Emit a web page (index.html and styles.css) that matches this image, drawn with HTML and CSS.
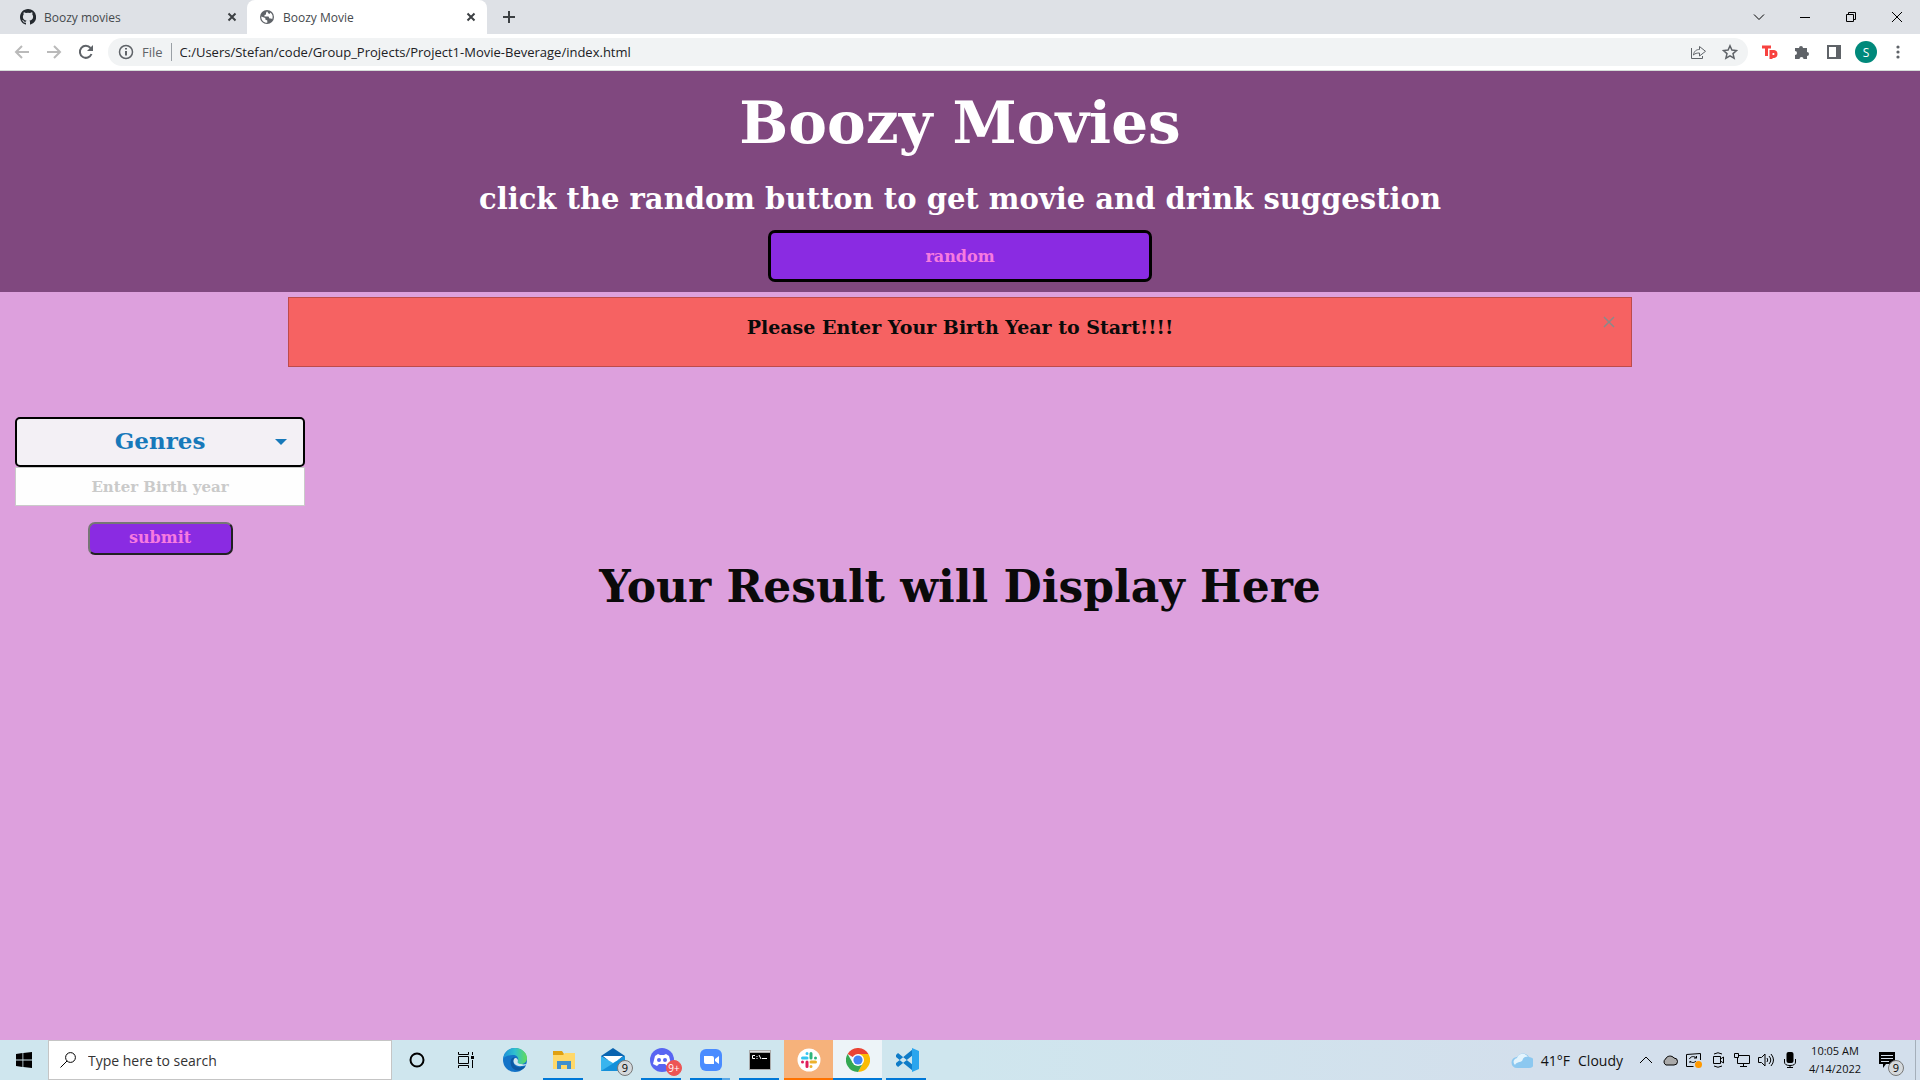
FILE: index.html
```html
<!DOCTYPE html>
<html lang="en">
<head>
<meta charset="utf-8">
<title>Boozy Movie</title>
<link rel="stylesheet" href="styles.css">
</head>
<body>
<div class="tabs">
  <div class="tab">
    <svg class="i16" viewBox="0 0 16 16"><path fill="#24292f" d="M8 0C3.6 0 0 3.6 0 8c0 3.500 2.300 6.500 5.500 7.600.4.1.5-.2.5-.4v-1.500c-2.200.5-2.700-.9-2.700-.9-.4-.9-.9-1.200-.9-1.200-.7-.5.1-.5.1-.5.800.1 1.200.8 1.200.8.7 1.200 1.900.9 2.300.7.1-.5.3-.9.5-1.100-1.800-.2-3.600-.9-3.600-4 0-.9.3-1.600.8-2.100-.1-.2-.4-1 .1-2.100 0 0 .7-.2 2.200.8a7.600 7.600 0 0 1 4 0c1.500-1 2.200-.8 2.200-.8.4 1.100.2 1.900.1 2.100.5.6.8 1.300.8 2.100 0 3.100-1.900 3.800-3.700 4 .3.3.6.8.6 1.500v2.200c0 .2.1.5.6.4A8 8 0 0 0 8 0"/></svg>
    <span class="tab-name">Boozy movies</span>
    <button class="bare" aria-label="Close tab"><svg class="i10" viewBox="0 0 10 10"><path class="ln dark" d="M1.500 1.500l7 7m0-7l-7 7"/></svg></button>
  </div>
  <div class="tab active">
    <svg class="i16" viewBox="0 0 16 16"><circle cx="8" cy="8" r="7" fill="#5f6368"/><path fill="#fff" d="M2.300 7.500l4 1.500v1.500l2 1v2.300c-3.500.2-6.300-2.600-6-6.300zM8 2.300L7 4v1.500L5.500 6v1.500h4l1 2h1.700l1 .7A6 6 0 0 0 11.500 3.500L10.500 5 9.500 4.500z"/></svg>
    <span class="tab-name">Boozy Movie</span>
    <button class="bare" aria-label="Close tab"><svg class="i10" viewBox="0 0 10 10"><path class="ln dark" d="M1.500 1.500l7 7m0-7l-7 7"/></svg></button>
  </div>
  <button class="bare new-tab" aria-label="New tab"><svg class="i14" viewBox="0 0 14 14"><path class="ln dark" d="M7 1v12M1 7h12"/></svg></button>
  <div class="window-buttons">
    <button class="bare" aria-label="Search tabs"><svg class="i12" viewBox="0 0 12 12"><path class="ln thin" d="M1 3.500l5 5 5-5"/></svg></button>
    <button class="bare" aria-label="Minimize"><svg class="i12" viewBox="0 0 12 12"><path class="ln thin" d="M1 6.500h10"/></svg></button>
    <button class="bare" aria-label="Restore"><svg class="i12" viewBox="0 0 12 12"><path class="ln thin" d="M1.500 3.500h7v7h-7zM3.500 3.500v-2h7v7h-2"/></svg></button>
    <button class="bare" aria-label="Close"><svg class="i12" viewBox="0 0 12 12"><path class="ln thin" d="M1 1l10 10m0-10L1 11"/></svg></button>
  </div>
</div>
<div class="toolbar">
  <div class="nav">
    <button class="bare" aria-label="Back"><svg class="i16" viewBox="0 0 16 16"><path class="ln pale" d="M15 8H2m6-6L2 8l6 6"/></svg></button>
    <button class="bare" aria-label="Forward"><svg class="i16" viewBox="0 0 16 16"><path class="ln pale" d="M1 8h13M8 2l6 6-6 6"/></svg></button>
    <button class="bare" aria-label="Reload"><svg class="i16" viewBox="0 0 16 16"><path class="ln grey" d="M13.500 10A6 6 0 1 1 12.500 4"/><path fill="#5f6368" d="M15 1v6H9z"/></svg></button>
  </div>
  <div class="omnibox">
    <svg class="i16" viewBox="0 0 16 16"><circle class="ln grey fine" cx="8" cy="8" r="6.500"/><path class="ln grey" d="M8 7v4.500M8 4v1.600"/></svg>
    <span class="scheme">File</span>
    <input class="url" type="text" aria-label="Address" value="C:/Users/Stefan/code/Group_Projects/Project1-Movie-Beverage/index.html">
    <button class="bare" aria-label="Share"><svg class="i16" viewBox="0 0 16 16"><path class="ln grey slim" d="M1.500 4v10.500h11V12M3.500 11c.5-4 3-5.500 6-5.500v-3l6 4.800-6 4.700V9c-2.500 0-4.500.3-6 2z"/></svg></button>
    <button class="bare" aria-label="Bookmark"><svg class="i16" viewBox="0 0 16 16"><path class="ln grey fine" d="M8 1.800l1.900 4.300 4.600.4-3.500 3.100 1.100 4.600L8 11.800l-4.100 2.400L5 9.600 1.500 6.500l4.600-.4z"/></svg></button>
  </div>
  <div class="extensions">
    <button class="bare" aria-label="TP extension"><svg class="i16" viewBox="0 0 16 16"><path fill="none" stroke="#f8423f" stroke-width="3" d="M0 3h9M4.500 2v10"/><path fill="none" stroke="#f8423f" stroke-width="3" d="M9 15V6M9 8.500c1-1.500 5-1.500 5 1.500s-4 3-5 1.500"/></svg></button>
    <button class="bare" aria-label="Extensions"><svg class="i16" viewBox="0 0 16 16"><path fill="#5f6368" d="M1 4h4a2 2 0 1 1 4 0h4v4a2 2 0 1 1 0 4v3H9.500a2 2 0 0 0-4 0H1v-4a2 2 0 0 0 0-4z"/></svg></button>
    <button class="bare" aria-label="Side panel"><svg class="i16" viewBox="0 0 16 16"><path fill="#5f6368" d="M1 1h14v14H1zM3 3v10h7V3z" fill-rule="evenodd"/></svg></button>
    <button class="bare avatar" aria-label="Profile">S</button>
    <button class="bare" aria-label="Menu"><svg class="i16" viewBox="0 0 16 16"><g fill="#5f6368"><circle cx="8" cy="3" r="1.600"/><circle cx="8" cy="8" r="1.600"/><circle cx="8" cy="13" r="1.600"/></g></svg></button>
  </div>
</div>

<div class="page">
  <header class="hero">
    <h1>Boozy Movies</h1>
    <h2>click the random button to get movie and drink suggestion</h2>
    <button class="random">random</button>
  </header>
  <div class="callout">
    <p>Please Enter Your Birth Year to Start!!!!</p>
    <button class="bare dismiss" aria-label="Dismiss"><svg class="i12" viewBox="0 0 12 12"><path fill="none" stroke="#8a8a8a" stroke-width="1.500" d="M1 1l10 10m0-10L1 11"/></svg></button>
  </div>
  <form class="filters">
    <button type="button" class="genres"><span>Genres</span><svg class="i12" viewBox="0 0 12 12"><path fill="#1779ba" d="M0 3h12L6 9z"/></svg></button>
    <input class="year" type="text" aria-label="Birth year" placeholder="Enter Birth year">
    <button type="button" class="submit">submit</button>
  </form>
  <h3 class="result">Your Result will Display Here</h3>
</div>

<div class="taskbar">
  <button class="bare start" aria-label="Start"><svg class="i16" viewBox="0 0 16 16"><path d="M0 2l6.500-.9v6.400H0zM7.300 1L16 0v7.500H7.300zM0 8.400h6.500v6.500L0 14zM7.300 8.400H16V16l-8.700-1.100z"/></svg></button>
  <label class="search">
    <svg class="i16" viewBox="0 0 16 16"><circle class="ln thin" cx="10.500" cy="5.500" r="4.900"/><path class="ln thin" d="M7 9L.5 15.500"/></svg>
    <input type="text" aria-label="Search" placeholder="Type here to search">
  </label>
  <button class="bare app" aria-label="Cortana"><svg class="i16" viewBox="0 0 16 16"><circle cx="8" cy="8" r="6.500" fill="none" stroke="#000" stroke-width="2"/></svg></button>
  <button class="bare app" aria-label="Task view"><svg class="i16" viewBox="0 0 16 16"><path class="ln thin" d="M.5 4.500h10v7H.500zM.5 0v2.500h10V0M.5 16v-2.500h10V16M14.500 0v3M14.500 8v8"/><path d="M13 4h3v3h-3z"/></svg></button>
  <button class="bare app" aria-label="Edge"><svg class="i24" viewBox="0 0 24 24"><defs><linearGradient id="eg"><stop offset="0" stop-color="#1b8fd8"/><stop offset=".5" stop-color="#2fc0d0"/><stop offset="1" stop-color="#63dc58"/></linearGradient></defs><circle cx="12" cy="12" r="12" fill="#1374c8"/><path fill="url(#eg)" d="M0 11C1 4 6 0 12 0c7 0 12 5 12 10 0 4-3 6-6 6-4 0-4-2-3-3 1-3-1-6-5-6-5 0-9 2-10 4z"/><path fill="#0c59a4" d="M8 12c-2 6 3 12 10 10 3-1 4-3 4.500-4-4 2-12 2-12-4 0-2 1-4 2-4-2-1-4 0-4.500 2z"/><path fill="#cfe6ee" d="M11 11c-2 4 2 8 8 7 2 0 4-1 5-2-1 0-3 1-6 0-3 0-4-2-3-3 0-3-3-4-4-2z"/></svg></button>
  <button class="bare app open" aria-label="File Explorer"><svg class="i24" viewBox="0 0 24 24"><path fill="#e0a010" d="M1 3h9l2 3v4H1z"/><path fill="#ffd869" d="M1 7h10l2-2h10v16H1z"/><path fill="#3f8fd0" d="M5 13h14v8h-4v-4H9v4H5z"/></svg></button>
  <button class="bare app" aria-label="Mail, 9 new"><svg class="i24" viewBox="0 0 24 24"><path fill="#0a64b0" d="M0 8l12-8 12 8v4H0z"/><path fill="#fff" d="M2 8h20l-10 8z"/><path fill="#38b4ee" d="M0 8l12 7 12-7v15H0z"/><path fill="#1590da" d="M0 23L24 8v15z"/></svg><span class="badge">9</span></button>
  <button class="bare app open" aria-label="Discord"><svg class="i24" viewBox="0 0 24 24"><circle cx="12" cy="12" r="12" fill="#5865f2"/><path fill="#fff" d="M8 6l2 1h4l2-1 3 2 2 8-4 2-2-2H9l-2 2-4-2 2-8z"/><g fill="#5865f2"><circle cx="9" cy="12" r="2"/><circle cx="15" cy="12" r="2"/></g></svg><span class="badge red">9+</span></button>
  <button class="bare app open several" aria-label="Zoom"><svg class="i24" viewBox="0 0 24 24"><rect x="1" y="1" width="22" height="22" rx="6" fill="#4a8cff"/><path fill="#fff" d="M5 8h8q2 0 2 2v6H7q-2 0-2-2zM16 11l4-3v8l-4-3z"/></svg></button>
  <button class="bare app open" aria-label="Command Prompt"><svg class="i24" viewBox="0 0 24 24"><path fill="#aaa" d="M1 2h22v20H1z"/><path fill="#ddd" d="M2 3h20v1H2z"/><path d="M2 5h20v16H2z"/><path fill="none" stroke="#fff" d="M7 7.500H4.500v3H7M9 8v1m0 1v1M11 7l2 4M14 10.500h5"/></svg></button>
  <button class="bare app open slack" aria-label="Slack"><svg class="i24" viewBox="0 0 24 24"><circle cx="12" cy="12" r="11.500" fill="#fff"/><g fill="none" stroke-width="3" stroke-linecap="round"><path stroke="#36c5f0" d="M5.500 10H10M10 5.500v.1"/><path stroke="#2eb67d" d="M14 5.500V10M18.500 10v.1"/><path stroke="#ecb22e" d="M14 14h4.500M14 18.500v.1"/><path stroke="#e01e5a" d="M10 14v4.500M5.500 14v.1"/></g></svg></button>
  <button class="bare app open current" aria-label="Chrome"><svg class="i24" viewBox="0 0 24 24"><path fill="#ea4335" d="M12 12L1.600 6a12 12 0 0 1 20.800 0z"/><path fill="#fbbc04" d="M12 12V6h10.400A12 12 0 0 1 12 24l5-9z"/><path fill="#34a853" d="M12 12l5 3-5 9A12 12 0 0 1 1.600 6l5.200 9z"/><circle cx="12" cy="12" r="6" fill="#fff"/><circle cx="12" cy="12" r="4.600" fill="#4285f4"/></svg></button>
  <button class="bare app open" aria-label="VS Code"><svg class="i24" viewBox="0 0 24 24"><path fill="#0f7cc8" d="M1 7l2-2 15 12v6L1 9zM1 17l2 2L18 7V1L1 15z"/><path fill="#2aa5ee" d="M17 0l7 3v18l-7 3z"/></svg></button>
  <div class="tray">
    <div class="weather">
      <svg class="i22" viewBox="0 0 22 22"><path fill="#8cc8f0" d="M6 19a5 5 0 0 1 0-11 7 7 0 0 1 12 0 5 5 0 0 1 0 11z"/><path fill="#e4f4fd" d="M4 16a4 4 0 0 1 2-7 6 6 0 0 1 11-1c-5-1-5 3-6 4s-6 1-7 4z"/></svg>
      <span>41°F</span><span>Cloudy</span>
    </div>
    <svg class="i16" viewBox="0 0 16 16"><path class="ln thin" d="M2 11l6-6 6 6"/></svg>
    <svg class="i16" viewBox="0 0 16 16"><path fill="#aaa" stroke="#000" d="M4 13a3.500 3.500 0 0 1-.5-6A5 5 0 0 1 12 6a3.500 3.500 0 0 1 0 7z"/></svg>
    <svg class="i16" viewBox="0 0 16 16"><path class="ln thin" d="M14.500 8V1.500L.5 2.500v12h7M3.500 7c1-3 5-3 7-1V4m0 2H8M10 9c-2 2-4 2-6 0v2"/><circle cx="12.500" cy="12.500" r="3.500" fill="#f90"/></svg>
    <svg class="i16" viewBox="0 0 16 16"><path class="ln thin" d="M4 2q4-2.500 8 0M4 14q4 2.500 8 0M3.500 4.500h7v7h-7zM10.500 7l3-2v6l-3-2"/></svg>
    <svg class="i16" viewBox="0 0 16 16"><path class="ln thin" d="M5 3.500h10.500v8H3.500V6M.5 1.500h4v4h-4zM9.500 12v2.500M6 14.500h7"/></svg>
    <svg class="i16" viewBox="0 0 16 16"><path class="ln thin" d="M.5 5.500h3L7 2v12l-3.500-3.500h-3zM9 6q1.500 2 0 4M11 4q3.500 4 0 8M13 2q5 6 0 12"/></svg>
    <svg class="i16" viewBox="0 0 16 16"><rect x="4.500" width="7" height="11" rx="2"/><path class="ln thin" d="M2.500 7v3q0 3.500 5.500 3.500t5.500-3.500V7M8 13v2.500M5 15.500h6"/></svg>
    <div class="clock"><span>10:05 AM</span><span>4/14/2022</span></div>
    <button class="bare notes" aria-label="Notifications, 9 new"><svg class="i16" viewBox="0 0 16 16"><path d="M0 0h16v12H7l-3 4v-4H0z"/><path stroke="#d3dfec" stroke-width="1" d="M2 3.500h12M2 6.500h12M2 9.500h8"/></svg><span class="badge">9</span></button>
  </div>
</div>
</body>
</html>
```
FILE: styles.css
```css
* { box-sizing: border-box; }
body {
  margin: 0;
  min-height: 100vh;
  display: flex;
  flex-direction: column;
  background: #dda0dd;
  color: #0a0a0a;
  font-family: "Open Sans", sans-serif;
}
svg { display: block; flex: none; }
.i10 { width: 10px; height: 10px; }
.i12 { width: 12px; height: 12px; }
.i14 { width: 14px; height: 14px; }
.i16 { width: 16px; height: 16px; }
.i22 { width: 22px; height: 22px; }
.i24 { width: 24px; height: 24px; }
.ln { fill: none; stroke-width: 2; }
.dark { stroke: #3c4043; }
.grey { stroke: #5f6368; }
.pale { stroke: #bababa; }
.fine { stroke-width: 1.5; }
.slim { stroke-width: 1; }
.thin { stroke: #000; stroke-width: 1; }
.bare {
  border: 0;
  padding: 0;
  background: none;
  color: inherit;
  font: inherit;
  display: flex;
  align-items: center;
  justify-content: center;
}

/* browser frame */
.tabs {
  height: 34px;
  display: flex;
  align-items: center;
  background: #dee1e6;
}
.tab {
  width: 240px;
  height: 100%;
  padding: 0 11px 0 12px;
  display: flex;
  align-items: center;
  gap: 8px;
  color: #45494d;
  font-size: 12px;
}
.tab:first-child { width: 247px; padding: 0 10px 0 20px; }
.tab.active { background: #fff; border-radius: 8px 8px 0 0; }
.tab-name { flex: 1; }
.new-tab { margin-left: 15px; }
.window-buttons { margin-left: auto; display: flex; }
.window-buttons button { width: 46px; height: 28px; }
.toolbar {
  height: 37px;
  display: flex;
  align-items: center;
  background: #fff;
  border-bottom: 1px solid #d5dbd8;
}
.nav { display: flex; gap: 16px; padding: 0 14px; }
.omnibox {
  flex: 1;
  height: 28px;
  border-radius: 14px;
  padding: 0 10px;
  display: flex;
  align-items: center;
  gap: 16px;
  background: #f1f3f4;
  font-size: 13px;
}
.scheme {
  margin-left: -8px;
  padding-right: 8px;
  border-right: 1px solid #9aa0a6;
  line-height: 18px;
  color: #5f6368;
}
.url {
  flex: 1;
  margin-left: -8px;
  border: 0;
  padding: 0;
  background: none;
  font: inherit;
  color: #202124;
}
.extensions { display: flex; align-items: center; gap: 16px; padding: 0 14px; }
.avatar {
  width: 22px;
  height: 22px;
  margin: 0 -3px;
  border-radius: 50%;
  background: #00897b;
  color: #fff;
  font-size: 12px;
}

/* web page */
.page {
  flex: 1;
  font-family: "DejaVu Serif", serif;
  font-weight: bold;
  text-align: center;
}
.hero {
  padding: 12px 0 10px;
  display: flex;
  flex-direction: column;
  align-items: center;
  background: #80487f;
  color: #fff;
}
h1, h2, h3, p { margin: 0; }
h1 { font-size: 58px; line-height: 80px; }
h2 { font-size: 29px; line-height: 44px; margin-top: 14px; }
.random {
  width: 20%;
  height: 52px;
  margin-top: 9px;
  border: 3px solid #000;
  border-radius: 7px;
  background: #8a2be2;
  color: #f77be0;
  font: bold 16px "DejaVu Serif", serif;
}
.callout {
  position: relative;
  width: 70%;
  height: 70px;
  margin: 5px auto 0;
  padding-top: 15px;
  border: 1px solid #bd4b4b;
  background: #f66262;
  font-size: 19px;
  line-height: 28px;
}
.dismiss { position: absolute; top: 18px; right: 16px; }
.filters {
  width: 290px;
  margin: 50px 0 0 15px;
  display: flex;
  flex-direction: column;
  align-items: center;
}
.genres {
  width: 100%;
  height: 50px;
  padding: 0 16px;
  display: grid;
  grid-template-columns: 1fr 12px;
  align-items: center;
  border: 2px solid #000;
  border-radius: 5px;
  background: #f3f0f5;
  color: #1779ba;
  font: bold 23px "DejaVu Serif", serif;
}
.genres span { padding: 0 0 4px 12px; }
.year {
  width: 100%;
  height: 39px;
  border: 1px solid #cacaca;
  padding: 0 8px;
  background: #fefefe;
  text-align: center;
  font: bold 15px "DejaVu Serif", serif;
}
.year::placeholder { color: #cacaca; opacity: 1; }
.submit {
  width: 50%;
  height: 33px;
  margin-top: 16px;
  padding: 0 0 2px;
  border: 2px outset #767676;
  border-radius: 7px;
  background: #8a2be2;
  color: #f77be0;
  font: bold 16px "DejaVu Serif", serif;
}
.result { font-size: 44px; line-height: 64px; }

/* taskbar */
.taskbar {
  height: 40px;
  display: flex;
  background: linear-gradient(90deg, #cfe6ee 0 50%, #d3dfec 80%);
  color: #111;
}
.start { width: 48px; }
.search {
  width: 344px;
  padding: 0 11px;
  display: flex;
  align-items: center;
  gap: 12px;
  border: 1px solid #c5c5c5;
  background: #fff;
}
.search input {
  flex: 1;
  min-width: 0;
  border: 0;
  padding: 0;
  background: none;
  font: 14px "Open Sans", sans-serif;
}
.search input::placeholder { color: #333; opacity: 1; }
.app { position: relative; width: 49px; }
.open::after {
  content: "";
  position: absolute;
  left: 4px;
  right: 5px;
  bottom: 0;
  height: 2px;
  background: #0078d7;
}
.several::after { background: linear-gradient(90deg, #0078d7 80%, #5aa9e6 80%); }
.slack { background: #f6b27b; }
.slack::after { left: 0; right: 0; background: #ff7300; }
.current { background: #edf4f8; }
.current::after { left: 0; right: 0; }
.badge {
  position: absolute;
  right: 4px;
  bottom: 4px;
  width: 16px;
  height: 16px;
  border: 1px solid #777;
  border-radius: 50%;
  background: #d5d9dc;
  color: #000;
  font-size: 11px;
  line-height: 14px;
}
.badge.red { border-color: #ed5555; background: #ed5555; color: #fff; font-size: 10px; }
.tray {
  margin-left: auto;
  margin-right: 4px;
  padding-right: 15px;
  display: flex;
  align-items: center;
  gap: 8px;
  border-right: 1px solid #a5afba;
}
.weather { display: flex; align-items: center; gap: 8px; margin-right: 7px; font-size: 14px; }
.clock {
  width: 58px;
  display: flex;
  flex-direction: column;
  align-items: center;
  font-size: 11px;
  line-height: 18px;
  white-space: nowrap;
}
.notes { position: relative; width: 26px; height: 40px; margin-left: 2px; }
.notes .badge { right: -4px; }
```
